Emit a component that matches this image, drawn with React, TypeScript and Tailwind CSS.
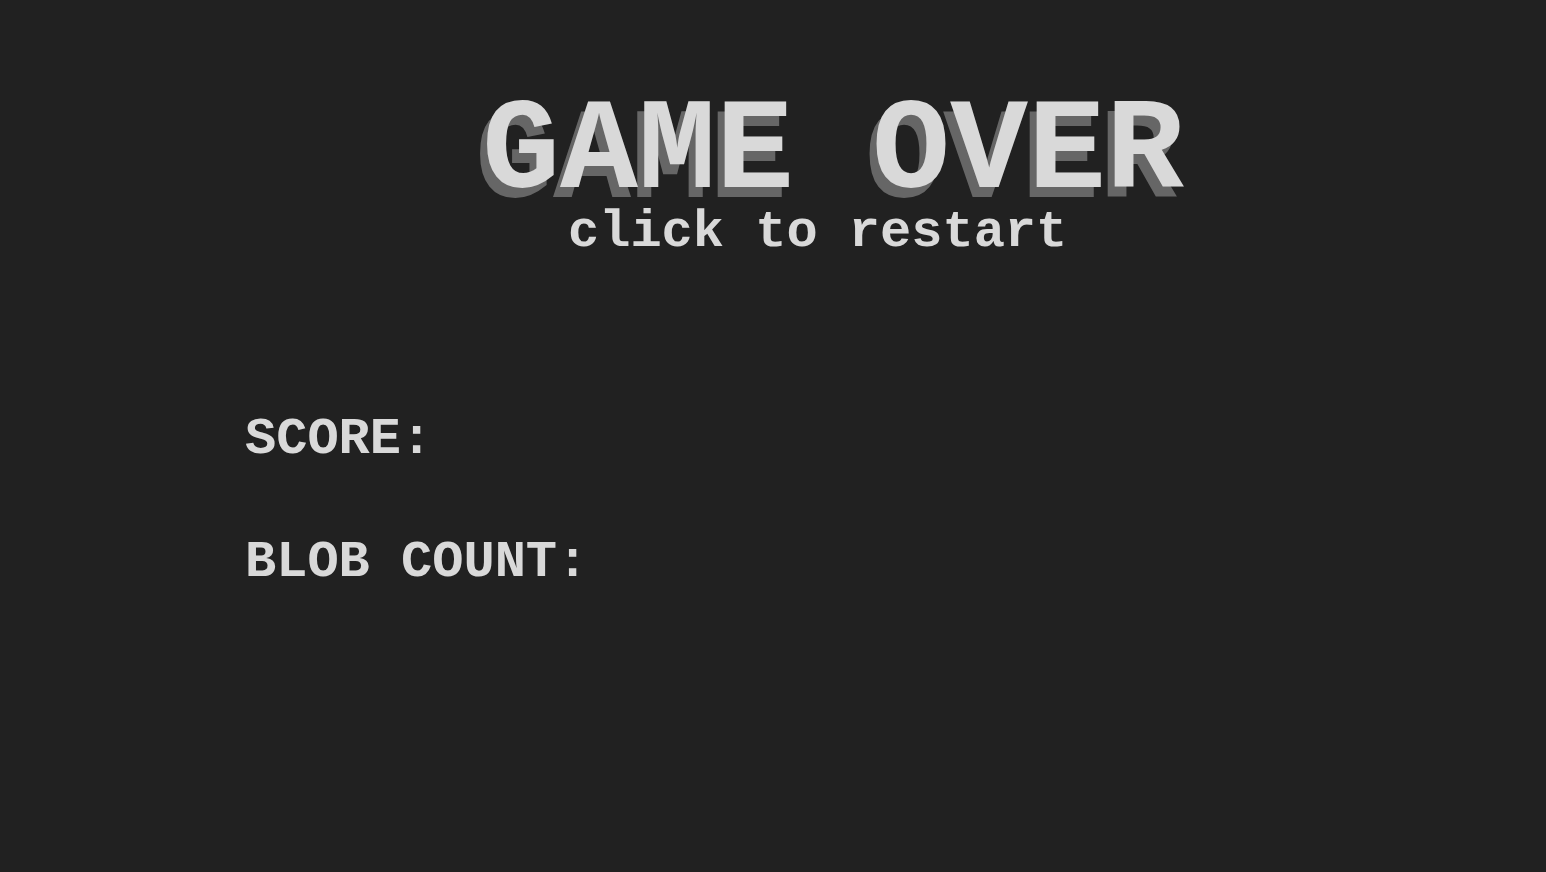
function App() {
  return (
    <div className="min-h-screen w-full bg-[#212121] text-[#d9d9d9] font-['Liberation_Mono','Courier_New',monospace] font-bold overflow-hidden">
      <div className="flex flex-col pt-[88px]">
        <h1 className="ml-[482px] text-[130px] leading-none whitespace-pre [text-shadow:-7px_10px_0_#666666]">
          GAME OVER
        </h1>
        <div className="ml-[568px] -mt-[11px] text-[52px] leading-none whitespace-pre">
          click to restart
        </div>
      </div>
      <div className="flex flex-col gap-[71px] ml-[245px] mt-[155px] text-[52px] leading-none">
        <div>SCORE:</div>
        <div>BLOB COUNT:</div>
      </div>
    </div>
  );
}
export default App;
